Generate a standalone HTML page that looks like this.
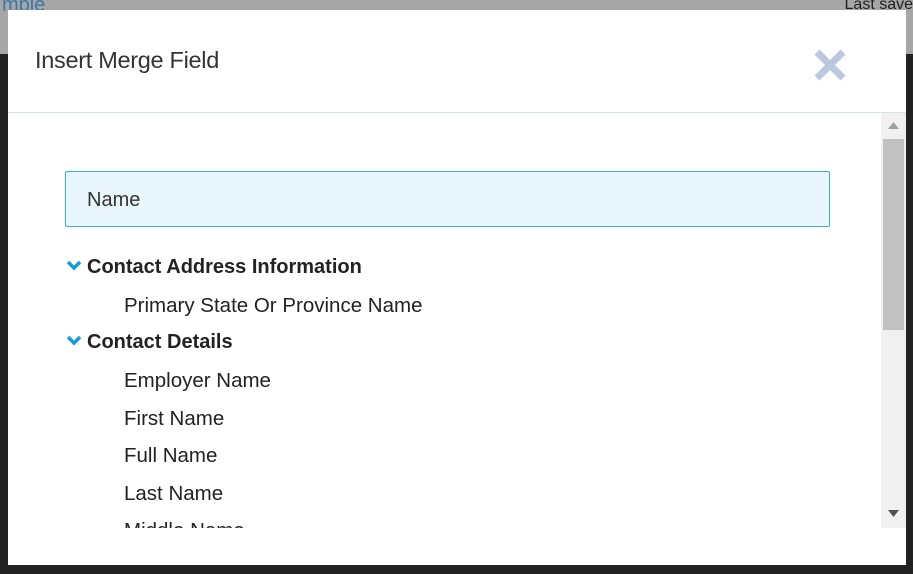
<!DOCTYPE html><html><head><style>
body{margin:0;width:913px;height:574px;overflow:hidden;background:#222;font-family:"Liberation Sans",sans-serif;position:relative}
.top{position:absolute;left:0;top:0;width:913px;height:54px;background:#a6a6a6}
.top .a{position:absolute;left:2px;top:-6px;color:#3a79a8;font-size:20px}
.top .b{position:absolute;right:0;top:-4px;color:#222;font-size:16px}
.modal{position:absolute;left:8px;top:10px;width:898px;height:555px;background:#fff}
.hd{height:102px;border-bottom:1px solid #d6e4ea;position:relative}
.hd h1{margin:0;position:absolute;left:27px;top:37px;font-weight:normal;font-size:23.5px;color:#333;letter-spacing:-0.3px}
.x{position:absolute;left:805px;top:38px}
.body{position:absolute;top:103px;left:0;width:898px;height:415px;overflow:hidden}
.sb{position:absolute;left:873px;top:0;width:25px;height:415px;background:#f0f0f0}
.th{position:absolute;left:2px;top:26px;width:21px;height:191px;background:#c1c1c1}
.box{position:absolute;left:57px;top:58px;width:763px;height:54px;border:1px solid #3bb4c4;background:#eaf6fd;border-radius:2px}
.box span{position:absolute;left:21px;top:17px;font-size:20px;color:#333}
.r{position:absolute;font-size:20.5px;color:#222;white-space:nowrap}
.g{left:79px;font-weight:bold;font-size:20px}
.i{left:116px}
.chev{position:absolute;left:-21px;top:4px}
</style></head><body>
<div class="top"><span class="a">mple</span><span class="b">Last save</span></div>
<div class="modal">
<div class="hd"><h1>Insert Merge Field</h1>
<svg class="x" width="34" height="34" viewBox="0 0 34 34"><path d="M4 4L30 30M30 4L4 30" stroke="#bcc8e0" stroke-width="7"/></svg></div>
<div class="body">
<div class="box"><span>Name</span></div>
<div class="r g" style="top:143px"><svg class="chev" width="16" height="12" viewBox="0 0 16 12"><path d="M2 2L8 8L14 2" stroke="#1a9ad6" stroke-width="3.5" fill="none"/></svg>Contact Address Information</div>
<div class="r i" style="top:181px">Primary State Or Province Name</div>
<div class="r g" style="top:218px"><svg class="chev" width="16" height="12" viewBox="0 0 16 12"><path d="M2 2L8 8L14 2" stroke="#1a9ad6" stroke-width="3.5" fill="none"/></svg>Contact Details</div>
<div class="r i" style="top:256px">Employer Name</div>
<div class="r i" style="top:294px">First Name</div>
<div class="r i" style="top:331px">Full Name</div>
<div class="r i" style="top:369px">Last Name</div>
<div class="r i" style="top:406px">Middle Name</div>
<div class="sb"><div class="th"></div>
<svg style="position:absolute;left:7px;top:9px" width="11" height="7"><path d="M0 7L5.5 0L11 7Z" fill="#a0a0a0"/></svg>
<svg style="position:absolute;left:7px;top:397px" width="11" height="7"><path d="M0 0L5.5 7L11 0Z" fill="#505050"/></svg></div>
</div></div>
</body></html>
